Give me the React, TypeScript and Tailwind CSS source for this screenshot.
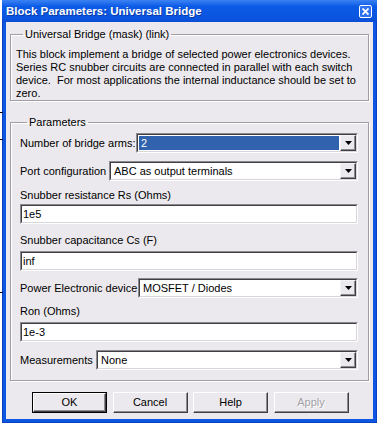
import React from 'react';

const sunkenOuter = 'border border-t-[#8c8a90] border-l-[#8c8a90] border-r-white border-b-white';
const sunkenInner = 'border border-t-[#404040] border-l-[#404040] border-r-[#d8d6dc] border-b-[#d8d6dc]';

function ArrowButton() {
  return (
    <div className="flex h-full w-[16px] shrink-0 items-center justify-center border border-t-[#f4f3f6] border-l-[#f4f3f6] border-r-[#404040] border-b-[#404040] bg-[#ebe9ed] shadow-[inset_-1px_-1px_0_#8c8a90]">
      <svg width="7" height="4" viewBox="0 0 7 4">
        <polygon points="0,0 7,0 3.5,4" fill="#000" />
      </svg>
    </div>
  );
}

function Combo({ value, width, selected }: { value: string; width: string; selected?: boolean }) {
  return (
    <div className={`${sunkenOuter} h-[20px] ${width}`}>
      <div className={`${sunkenInner} flex h-full bg-white`}>
        <div className="flex flex-1 items-center p-[1px]">
          <div
            className={`flex h-full flex-1 items-center px-[2px] ${
              selected ? 'bg-[#3162ae] text-white' : 'text-black'
            }`}
          >
            {value}
          </div>
        </div>
        <ArrowButton />
      </div>
    </div>
  );
}

function Edit({ value }: { value: string }) {
  return (
    <div className={`${sunkenOuter} h-[20px] w-full`}>
      <div className={`${sunkenInner} flex h-full items-center bg-white px-[1px]`}>{value}</div>
    </div>
  );
}

function Button({ label, primary, disabled }: { label: string; primary?: boolean; disabled?: boolean }) {
  const face = (
    <div className="flex h-full w-full items-center justify-center border border-t-white border-l-white border-r-[#404040] border-b-[#404040] shadow-[inset_-1px_-1px_0_#8c8a90]">
      <span className={disabled ? 'text-[#a3a1a7] [text-shadow:1px_1px_0_#fff]' : 'text-black'}>{label}</span>
    </div>
  );
  return (
    <div className={`h-[21px] w-[75px] bg-[#ebe9ed] ${primary ? 'border border-black' : ''}`}>{face}</div>
  );
}

export default function App() {
  return (
    <div className="relative h-[426px] w-[377px] bg-white font-['Liberation_Sans',Arial,sans-serif] text-[11px] leading-[13px] text-black">
      <div className="absolute left-0 top-[112px] h-px w-[3px] bg-black" />
      <div className="absolute left-0 top-[139px] h-px w-[3px] bg-black" />
      <div className="absolute left-0 top-[292px] h-px w-[3px] bg-black" />

      <div className="ml-[2px] flex h-[423px] w-[375px] flex-col bg-[#0b57e2] shadow-[inset_1px_0_0_#0a3fc0,inset_-1px_0_0_#0a3fc0,inset_0_-1px_0_#0a3fc0]">
        {/* title bar */}
        <div className="flex h-[22px] shrink-0 items-center justify-between bg-[linear-gradient(#3a82f4,#0b5ae6_30%,#0a55e0_80%,#0a4dd4)] pl-[4px] pr-[5px]">
          <span className="text-[11.5px] font-bold text-white [text-shadow:1px_1px_0_#0a3aa8]">
            Block Parameters: Universal Bridge
          </span>
          <div className="flex h-[13px] w-[13px] items-center justify-center rounded-[2px] border border-white bg-[#2f72f0]">
            <svg width="7" height="7" viewBox="0 0 7 7">
              <path d="M0.5 0.5 L6.5 6.5 M6.5 0.5 L0.5 6.5" stroke="#fff" strokeWidth="1.8" />
            </svg>
          </div>
        </div>

        {/* body */}
        <div className="mx-[4px] mb-[4px] flex flex-1 flex-col bg-[#ebe9ed] px-[4px]">
          <fieldset className="mt-[6px] border border-[#a09ea4] px-[5px] pb-0 pt-[7px] shadow-[inset_1px_1px_0_#fff,1px_1px_0_#fff]">
            <legend className="ml-[7px] px-[2px]">Universal Bridge (mask) (link)</legend>
            <p>
              This block implement a bridge of selected power electronics devices. Series RC snubber circuits are
              connected in parallel with each switch device.&nbsp; For most applications the internal inductance
              should be set to zero.
            </p>
          </fieldset>

          <fieldset className="mt-[15px] flex flex-col border border-[#a09ea4] pb-[10px] pl-[9px] pr-[10px] pt-[4px] shadow-[inset_1px_1px_0_#fff,1px_1px_0_#fff]">
            <legend className="ml-[7px] px-[2px]">Parameters</legend>
            <div className="flex items-center justify-between">
              <span>Number of bridge arms:</span>
              <Combo value="2" width="w-[222px]" selected />
            </div>
            <div className="mt-[8px] flex items-center justify-between">
              <span>Port configuration</span>
              <Combo value="ABC as output terminals" width="w-[249px]" />
            </div>
            <div className="mt-[8px]">Snubber resistance Rs (Ohms)</div>
            <div className="mt-[2px]">
              <Edit value="1e5" />
            </div>
            <div className="mt-[10px]">Snubber capacitance Cs (F)</div>
            <div className="mt-[4px]">
              <Edit value="inf" />
            </div>
            <div className="mt-[7px] flex items-center justify-between">
              <span>Power Electronic device</span>
              <Combo value="MOSFET / Diodes" width="w-[220px]" />
            </div>
            <div className="mt-[7px]">Ron (Ohms)</div>
            <div className="mt-[4px]">
              <Edit value="1e-3" />
            </div>
            <div className="mt-[8px] flex items-center justify-between">
              <span>Measurements</span>
              <Combo value="None" width="w-[262px]" />
            </div>
          </fieldset>

          <div className="mt-[11px] flex gap-[5.5px] pl-[22px]">
            <Button label="OK" primary />
            <Button label="Cancel" />
            <Button label="Help" />
            <Button label="Apply" disabled />
          </div>
        </div>
      </div>
    </div>
  );
}
